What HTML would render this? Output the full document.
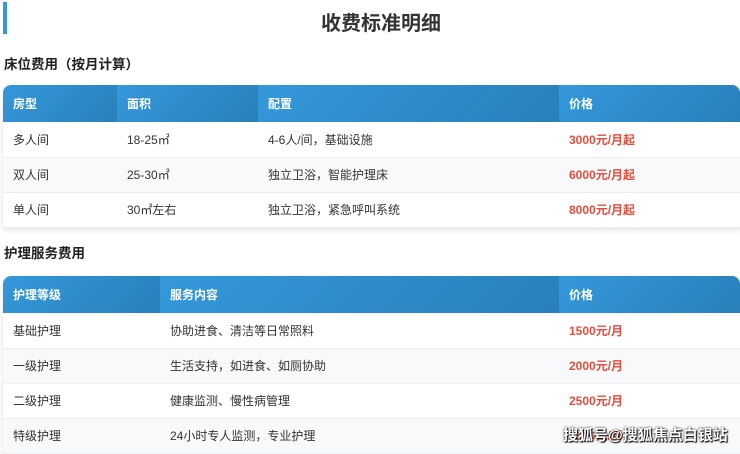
<!DOCTYPE html>
<html><head><meta charset="utf-8"><style>
*{margin:0;padding:0;box-sizing:border-box}
body{width:740px;height:451px;overflow:hidden;background:#fff;font-family:"Liberation Sans","Noto Sans CJK SC",sans-serif;color:#333;position:relative}
.bar{position:absolute;left:3px;top:2px;width:4px;height:32px;background:#3498db}
h1{position:absolute;left:0;width:762px;top:7px;text-align:center;font-size:20px;font-weight:bold;color:#333}
h2{position:absolute;left:4px;font-size:13.5px;font-weight:bold;color:#222}
table{position:absolute;left:3px;width:737px;border-collapse:collapse;border-radius:8px 8px 0 0;overflow:hidden;box-shadow:0 2px 6px rgba(0,0,0,.12);font-size:12px}
th{height:37px;text-align:left;padding-left:10px;color:#fff;font-weight:bold;background:linear-gradient(135deg,#3498db,#2980b9)}
td{height:35px;padding-left:10px;border-bottom:1px solid #eceff2}
tr:nth-child(odd) td{background:#f7f9fb}
.p{color:#e74c3c;font-weight:bold}
.wm{position:absolute;left:563px;top:424px;font-size:15px;font-weight:bold;color:#fff;text-shadow:0 0 2px #000,1px 1px 1px #000}
</style></head><body>
<div class="bar"></div>
<h1>收费标准明细</h1>
<h2 style="top:53px">床位费用（按月计算）</h2>
<table style="top:85px">
<tr><th style="width:114px">房型</th><th style="width:141px">面积</th><th style="width:301px">配置</th><th>价格</th></tr>
<tr><td>多人间</td><td>18-25㎡</td><td>4-6人/间，基础设施</td><td class="p">3000元/月起</td></tr>
<tr><td>双人间</td><td>25-30㎡</td><td>独立卫浴，智能护理床</td><td class="p">6000元/月起</td></tr>
<tr><td>单人间</td><td>30㎡左右</td><td>独立卫浴，紧急呼叫系统</td><td class="p">8000元/月起</td></tr>
</table>
<h2 style="top:242px">护理服务费用</h2>
<table style="top:276px">
<tr><th style="width:157px">护理等级</th><th style="width:399px">服务内容</th><th>价格</th></tr>
<tr><td>基础护理</td><td>协助进食、清洁等日常照料</td><td class="p">1500元/月</td></tr>
<tr><td>一级护理</td><td>生活支持，如进食、如厕协助</td><td class="p">2000元/月</td></tr>
<tr><td>二级护理</td><td>健康监测、慢性病管理</td><td class="p">2500元/月</td></tr>
<tr><td>特级护理</td><td>24小时专人监测，专业护理</td><td class="p">3500元/月</td></tr>
</table>
<div class="wm">搜狐号@搜狐焦点白银站</div>
</body></html>
